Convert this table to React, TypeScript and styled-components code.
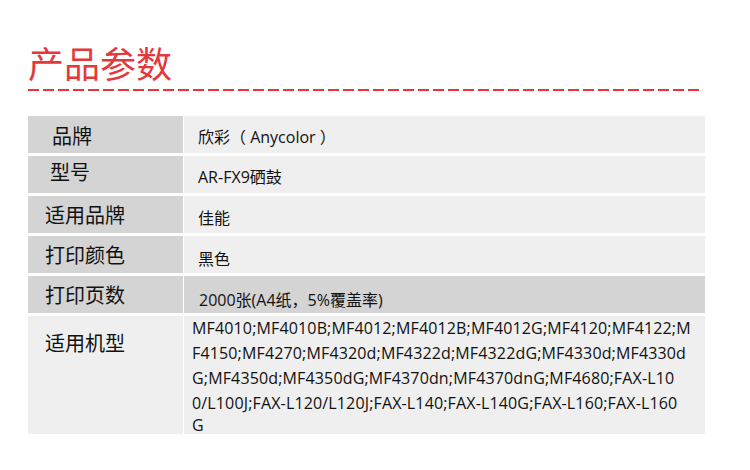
import React from "react";
import styled, { createGlobalStyle } from "styled-components";

const Global = createGlobalStyle`
  html, body { margin: 0; padding: 0; background: #ffffff; }
  body { font-family: "Noto Sans CJK SC", "Noto Sans", sans-serif; }
`;

const Page = styled.div`
  width: 750px;
  height: 470px;
  box-sizing: border-box;
  padding: 40px 45px 0 28px;
  overflow: hidden;
`;

const Title = styled.h1`
  margin: 0;
  font-size: 36px;
  line-height: 44px;
  font-weight: 400;
  color: #e4393c;
  letter-spacing: 0;
`;

const Dashed = styled.div`
  margin-top: 5px;
  width: 672px;
  height: 2px;
  background: repeating-linear-gradient(to right, #ec3338 0 11px, transparent 11px 15px);
`;

const Table = styled.div`
  margin-top: 25px;
  display: flex;
  flex-direction: column;
  gap: 3px;
  width: 677px;
`;

const Row = styled.div<{ $h?: number }>`
  display: grid;
  grid-template-columns: 156px 1fr;
  grid-template-rows: ${(p) => p.$h ?? 37}px;
  height: ${(p) => p.$h ?? 37}px;
`;

const Label = styled.div<{ $pad: number; $light?: boolean; $top?: boolean; $dy?: number }>`
  background: ${(p) => (p.$light ? "#efefef" : "#d4d4d4")};
  display: flex;
  align-items: ${(p) => (p.$top ? "flex-start" : "center")};
  padding-left: ${(p) => p.$pad}px;
  padding-top: ${(p) => (p.$top ? 12 : 0)}px;
  font-size: 20px;
  color: #111;
  border-right: 1px solid #ffffff;
  & > span { position: relative; top: ${(p) => p.$dy ?? 0}px; }
`;

const Value = styled.div<{ $dark?: boolean; $pad?: number; $dy?: number }>`
  background: ${(p) => (p.$dark ? "#d4d4d4" : "#efefef")};
  display: flex;
  align-items: center;
  padding-left: ${(p) => p.$pad ?? 14}px;
  font-size: 16px;
  font-family: "Open Sans", "Noto Sans CJK SC", sans-serif;
  color: #111;
  & > span { position: relative; top: ${(p) => p.$dy ?? 0}px; }
`;

const Models = styled.div`
  background: #efefef;
  padding: 0 0 0 8px;
  font-size: 16px;
  line-height: 25px;
  color: #111;
  font-family: "Open Sans", "Noto Sans CJK SC", sans-serif;
  letter-spacing: 0.15px;
`;

const Line = styled.div`
  white-space: nowrap;
  &:last-child { line-height: 18px; }
`;

const rows = [
  { label: "品牌", value: "欣彩（ Anycolor ）", pad: 24, dy: 1, vdy: 1 },
  { label: "型号", value: "AR-FX9硒鼓", pad: 22, dy: -3, vdy: 1 },
  { label: "适用品牌", value: "佳能", pad: 17, dy: 0, vdy: 2 },
  { label: "打印颜色", value: "黑色", pad: 17, dy: 0, vdy: 3 },
];

const modelLines = [
  "MF4010;MF4010B;MF4012;MF4012B;MF4012G;MF4120;MF4122;M",
  "F4150;MF4270;MF4320d;MF4322d;MF4322dG;MF4330d;MF4330d",
  "G;MF4350d;MF4350dG;MF4370dn;MF4370dnG;MF4680;FAX-L10",
  "0/L100J;FAX-L120/L120J;FAX-L140;FAX-L140G;FAX-L160;FAX-L160",
  "G",
];

export default function App() {
  return (
    <>
      <Global />
      <Page>
        <Title>产品参数</Title>
        <Dashed />
        <Table>
          {rows.map((r) => (
            <Row key={r.label}>
              <Label $pad={r.pad} $dy={r.dy}>
                <span>{r.label}</span>
              </Label>
              <Value $dy={r.vdy}>
                <span>{r.value}</span>
              </Value>
            </Row>
          ))}
          <Row>
            <Label $pad={17} $dy={0}>
              <span>打印页数</span>
            </Label>
            <Value $dark $pad={15} $dy={4}>
              <span>2000张(A4纸，5%覆盖率)</span>
            </Value>
          </Row>
          <Row $h={118}>
            <Label $pad={17} $light $top>
              <span>适用机型</span>
            </Label>
            <Models>
              {modelLines.map((l, i) => (
                <Line key={i}>{l}</Line>
              ))}
            </Models>
          </Row>
        </Table>
      </Page>
    </>
  );
}
